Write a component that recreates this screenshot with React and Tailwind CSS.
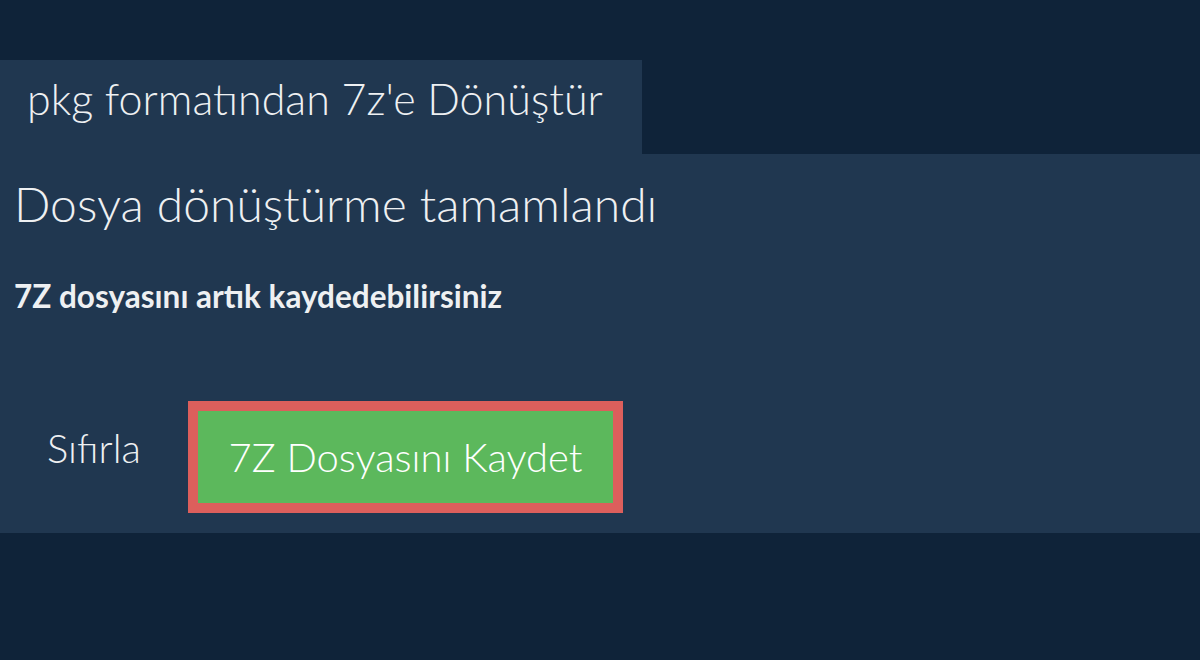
export default function App() {
  return (
    <div className="min-h-[660px] w-full bg-[#0f2339] pt-[60px] font-['Lato','Noto_Sans',sans-serif] text-[#eef0f2]">
      <div className="h-[94px] w-[642px] bg-[#203750] pl-[27px] pt-[17px]">
        <h1 className="text-[43px] font-light leading-[43px]">pkg formatından 7z'e Dönüştür</h1>
      </div>
      <div className="flex h-[379px] flex-col bg-[#203750] pl-[14px]">
        <h2 className="mt-[21px] text-[48px] font-light leading-[58px]">Dosya dönüştürme tamamlandı</h2>
        <p className="mt-[43px] text-[31.5px] font-bold leading-[40px]">7Z dosyasını artık kaydedebilirsiniz</p>
        <div className="mt-[85px] flex items-start">
          <button type="button" className="mt-[27px] w-[174px] pl-[33px] text-left text-[40px] font-light leading-[40px] text-[#eef0f2]">
            Sıfırla
          </button>
          <button
            type="button"
            className="flex h-[112px] w-[435px] items-center justify-center border-[10px] border-[#dc5f5c] bg-[#5cb85c] text-[40px] font-light leading-none text-white"
          >
            7Z Dosyasını Kaydet
          </button>
        </div>
      </div>
    </div>
  );
}
